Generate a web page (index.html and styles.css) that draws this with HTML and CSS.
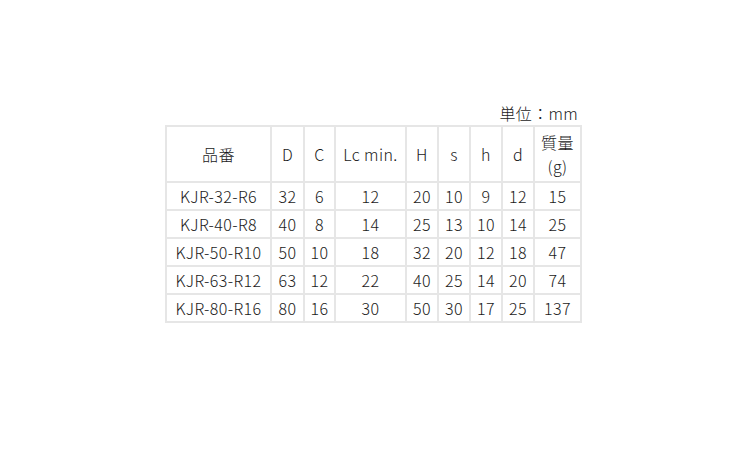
FILE: index.html
```html
<!DOCTYPE html>
<html lang="ja">
<head>
<meta charset="utf-8">
<link rel="stylesheet" href="styles.css">
</head>
<body>
<div class="wrap">
  <div class="unit">単位：mm</div>
  <table class="spec">
    <colgroup>
      <col class="c-name"><col class="c-d"><col class="c-c"><col class="c-lc"><col class="c-n"><col class="c-n"><col class="c-n"><col class="c-n"><col class="c-w">
    </colgroup>
    <thead>
      <tr><th>品番</th><th>D</th><th>C</th><th>Lc min.</th><th>H</th><th>s</th><th>h</th><th>d</th><th>質量<br>(g)</th></tr>
    </thead>
    <tbody>
      <tr><td>KJR-32-R6</td><td>32</td><td>6</td><td>12</td><td>20</td><td>10</td><td>9</td><td>12</td><td>15</td></tr>
      <tr><td>KJR-40-R8</td><td>40</td><td>8</td><td>14</td><td>25</td><td>13</td><td>10</td><td>14</td><td>25</td></tr>
      <tr><td>KJR-50-R10</td><td>50</td><td>10</td><td>18</td><td>32</td><td>20</td><td>12</td><td>18</td><td>47</td></tr>
      <tr><td>KJR-63-R12</td><td>63</td><td>12</td><td>22</td><td>40</td><td>25</td><td>14</td><td>20</td><td>74</td></tr>
      <tr><td>KJR-80-R16</td><td>80</td><td>16</td><td>30</td><td>50</td><td>30</td><td>17</td><td>25</td><td>137</td></tr>
    </tbody>
  </table>
</div>
</body>
</html>
```

FILE: styles.css
```css
html, body {
  margin: 0;
  padding: 0;
  background: #fff;
}
body {
  font-family: "Noto Sans CJK JP", "Noto Sans", sans-serif;
  font-size: 16px;
  font-weight: 300;
  color: #1a1a1a;
}
.wrap {
  width: 417px;
  margin-left: 165px;
  padding-top: 101px;
}
.unit {
  text-align: right;
  line-height: 24px;
  height: 24px;
  padding-right: 4px;
  letter-spacing: 0.3px;
}
.spec {
  border-collapse: separate;
  border-spacing: 0;
  table-layout: fixed;
  width: 417px;
  border-top: 2px solid #e6e6e6;
  border-left: 2px solid #e6e6e6;
}
.spec th, .spec td {
  border-right: 2px solid #e6e6e6;
  border-bottom: 2px solid #e6e6e6;
  padding: 0;
  text-align: center;
  font-weight: 300;
  line-height: 24px;
  white-space: nowrap;
  letter-spacing: 0.4px;
}
.spec th {
  height: 54px;
}
.spec td {
  height: 26px;
}
.c-name { width: 105px; }
.c-d { width: 33px; }
.c-c { width: 31px; }
.c-lc { width: 71px; }
.c-n { width: 32px; }
.c-w { width: 47px; }
```
